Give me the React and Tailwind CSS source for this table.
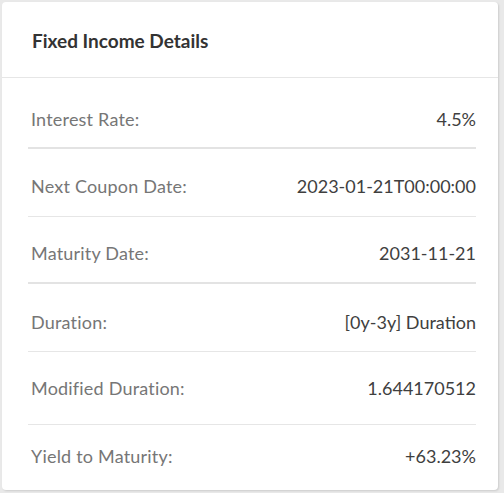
const rows = [
  { label: 'Interest Rate:', value: '4.5%', cls: 'h-[71px] pt-[29px] border-b-2 border-[#e3e3e3]' },
  { label: 'Next Coupon Date:', value: '2023-01-21T00:00:00', cls: 'h-[68px] pt-[25px] border-b border-[#e6e6e6]' },
  { label: 'Maturity Date:', value: '2031-11-21', cls: 'h-[67px] pt-[24px] border-b-2 border-[#e3e3e3]' },
  { label: 'Duration:', value: '[0y-3y] Duration', cls: 'h-[68px] pt-[26px] border-b border-[#e6e6e6]' },
  { label: 'Modified Duration:', value: '1.644170512', cls: 'h-[73px] pt-[24px] border-b border-[#e6e6e6]' },
  { label: 'Yield to Maturity:', value: '+63.23%', cls: 'h-[66px] pt-[19px]' },
]

export default function App() {
  return (
    <div className="w-[504px] h-[493px] bg-[#e9e9e9] pt-[2px] pl-[2px] font-['Lato','Liberation_Sans',sans-serif]">
      <div className="w-[496px] h-[488px] bg-white rounded-[4px] shadow-[1px_1px_2px_rgba(0,0,0,0.12)] overflow-hidden">
        <div className="h-[76px] border-b border-[#e6e6e6] pl-[30px] pt-[3px] flex items-center">
          <h2 className="text-[19px] font-bold text-[#333] leading-6">Fixed Income Details</h2>
        </div>
        <div className="ml-[26px] mr-[22px]">
          {rows.map((r) => (
            <div key={r.label} className={`flex justify-between items-start text-[18px] tracking-[0.2px] leading-6 ${r.cls}`}>
              <span className="pl-[3px] text-[#767676]">{r.label}</span>
              <span className="text-[#3f3f3f] tracking-normal">{r.value}</span>
            </div>
          ))}
        </div>
      </div>
    </div>
  )
}
